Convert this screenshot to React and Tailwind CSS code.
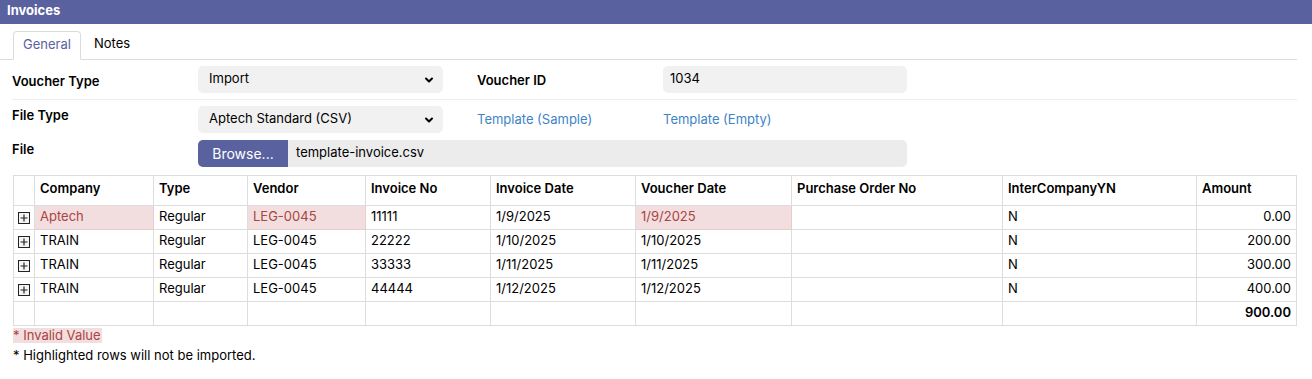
import { ChevronDown } from 'lucide-react';

const rows = [
  { company: 'Aptech', type: 'Regular', vendor: 'LEG-0045', inv: '11111', invDate: '1/9/2025', vDate: '1/9/2025', po: '', ic: 'N', amount: '0.00', bad: ['company', 'vendor', 'vDate'] },
  { company: 'TRAIN', type: 'Regular', vendor: 'LEG-0045', inv: '22222', invDate: '1/10/2025', vDate: '1/10/2025', po: '', ic: 'N', amount: '200.00', bad: [] },
  { company: 'TRAIN', type: 'Regular', vendor: 'LEG-0045', inv: '33333', invDate: '1/11/2025', vDate: '1/11/2025', po: '', ic: 'N', amount: '300.00', bad: [] },
  { company: 'TRAIN', type: 'Regular', vendor: 'LEG-0045', inv: '44444', invDate: '1/12/2025', vDate: '1/12/2025', po: '', ic: 'N', amount: '400.00', bad: [] },
];

const cols = [
  { key: 'company', label: 'Company', w: 'w-[119px]' },
  { key: 'type', label: 'Type', w: 'w-[94px]' },
  { key: 'vendor', label: 'Vendor', w: 'w-[118px]' },
  { key: 'inv', label: 'Invoice No', w: 'w-[125px]' },
  { key: 'invDate', label: 'Invoice Date', w: 'w-[145px]' },
  { key: 'vDate', label: 'Voucher Date', w: 'w-[156px]' },
  { key: 'po', label: 'Purchase Order No', w: 'w-[211px]' },
  { key: 'ic', label: 'InterCompanyYN', w: 'w-[194px]' },
  { key: 'amount', label: 'Amount', w: '' },
];

function FakeSelect({ value }) {
  return (
    <div className="flex h-[27px] w-[245px] items-center justify-between rounded-[5px] bg-[#f1f1f1] pb-[2px] pl-[11px] pr-[8px]">
      <span>{value}</span>
      <ChevronDown className="mt-[2px] h-[12px] w-[12px] text-black" strokeWidth={4} />
    </div>
  );
}

function PlusBox() {
  return (
    <span className="inline-flex h-[12px] w-[12px] items-center justify-center border border-[#222] bg-[#f4f4f4]">
      <svg width="8" height="8" viewBox="0 0 8 8">
        <path d="M4 0.5V7.5M0.5 4H7.5" stroke="#222" strokeWidth="1.2" />
      </svg>
    </span>
  );
}

export default function App() {
  return (
    <div className="min-h-[379px] w-[1312px] bg-white text-[13px] text-black" style={{ fontFamily: 'Inter, "Noto Sans", sans-serif' }}>
      <div className="flex h-[24px] items-center bg-[#59619f] px-[7px] pb-[2px] text-[13px] font-bold text-white">Invoices</div>

      <div className="pr-[15px]">
        <div className="mt-[7px] flex h-[29px] items-end border-b border-[#dcdcdc] pl-[13px]">
          <div className="-mb-px flex h-[29px] w-[68px] items-center justify-center rounded-t-[4px] border border-b-white border-[#dcdcdc] bg-white pb-[2px] text-[#59619f]">General</div>
          <div className="flex h-[29px] items-center px-[13px] pb-[2px]">Notes</div>
        </div>

        <div className="pl-[12px]">
          <div className="flex items-start border-b border-[#ececec] pt-[6px] pb-[6px]">
            <div className="w-[186px] pt-[6px] font-semibold">Voucher Type</div>
            <FakeSelect value="Import" />
            <div className="w-[34px]" />
            <div className="w-[186px] pt-[5px] font-semibold">Voucher ID</div>
            <div className="flex h-[27px] w-[244px] items-center rounded-[5px] bg-[#f1f1f1] px-[7px] pb-[1px]">1034</div>
          </div>

          <div className="flex items-start pt-[6px]">
            <div className="w-[186px] font-semibold">File Type</div>
            <FakeSelect value="Aptech Standard (CSV)" />
            <div className="w-[34px]" />
            <div className="w-[186px] pt-[4px] text-[#3d84c6]">Template (Sample)</div>
            <div className="pt-[4px] text-[#3d84c6]">Template (Empty)</div>
          </div>

          <div className="flex items-start pt-[7px]">
            <div className="w-[186px] font-semibold">File</div>
            <div className="flex h-[27px] w-[709px] overflow-hidden rounded-[5px] bg-[#ececec]">
              <div className="flex w-[90px] items-center justify-center bg-[#59619f] pb-[1px] text-[14px] text-white">Browse...</div>
              <div className="flex items-center pb-[1px] pl-[8px]">template-invoice.csv</div>
            </div>
          </div>
        </div>

        <div className="ml-[13px] mt-[8px]">
          <table className="w-full border-collapse">
            <thead>
              <tr className="h-[30px]">
                <th className="w-[21px] border border-[#dddddd]" />
                {cols.map((c) => (
                  <th key={c.key} className={`${c.w} border border-[#dddddd] px-[5px] pb-[4px] text-left font-semibold`}>{c.label}</th>
                ))}
              </tr>
            </thead>
            <tbody>
              {rows.map((r, i) => (
                <tr key={i} className="h-[24px]">
                  <td className="border border-[#dddddd] pl-[4px] align-middle">
                    <div className="flex items-center pt-[1px]"><PlusBox /></div>
                  </td>
                  {cols.map((c) => {
                    const bad = r.bad.includes(c.key);
                    return (
                      <td
                        key={c.key}
                        className={`border border-[#dddddd] px-[5px] pb-[2px] ${c.key === 'amount' ? 'text-right' : 'text-left'} ${bad ? 'bg-[#f2dede] text-[#a94442] border-[#ebcccc]' : ''}`}
                      >
                        {r[c.key]}
                      </td>
                    );
                  })}
                </tr>
              ))}
              <tr className="h-[24px]">
                <td className="border border-[#dddddd]" />
                {cols.map((c) => (
                  <td key={c.key} className="border border-[#dddddd] px-[5px] pb-[2px] text-right font-semibold">
                    {c.key === 'amount' ? '900.00' : ''}
                  </td>
                ))}
              </tr>
            </tbody>
          </table>

          <div className="inline-block bg-[#f2dede] pr-[1px] leading-[15px] text-[#a94442]">* Invalid Value</div>
          <div className="leading-[18px]">* Highlighted rows will not be imported.</div>
        </div>
      </div>
    </div>
  );
}
